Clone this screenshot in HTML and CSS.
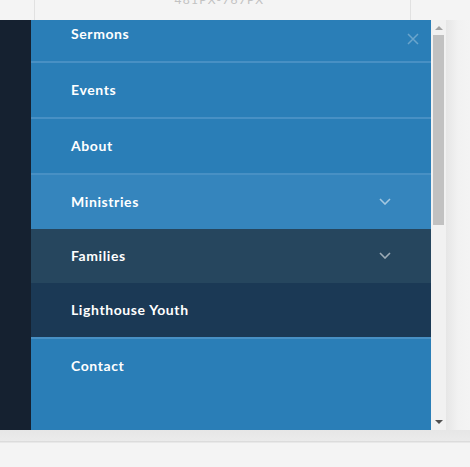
FILE: index.html
```html
<!DOCTYPE html>
<html>
<head>
<meta charset="utf-8">
<link rel="stylesheet" href="styles.css">
</head>
<body>
<div class="topbar">
  <div class="topbar-inner"><span class="size-label">481px-767px</span></div>
</div>
<div class="stage">
  <div class="dark-side"></div>
  <nav class="menu">
    <ul class="menu-list">
      <li class="item bordered"><span>Sermons</span></li>
      <li class="item bordered"><span>Events</span></li>
      <li class="item bordered"><span>About</span></li>
      <li class="item active"><span>Ministries</span>
        <svg class="chev" width="12" height="7" viewBox="0 0 12 7"><path d="M1 1 L6 6 L11 1" fill="none" stroke="currentColor" stroke-width="1.6"/></svg>
      </li>
      <li class="item parent"><span>Families</span>
        <svg class="chev" width="12" height="7" viewBox="0 0 12 7"><path d="M1 1 L6 6 L11 1" fill="none" stroke="currentColor" stroke-width="1.6"/></svg>
      </li>
      <li class="item sub bordered"><span>Lighthouse Youth</span></li>
      <li class="item"><span>Contact</span></li>
    </ul>
    <svg class="close" width="12" height="12" viewBox="0 0 12 12"><path d="M1 1 L11 11 M11 1 L1 11" stroke="currentColor" stroke-width="1.5"/></svg>
  </nav>
  <div class="scrollbar">
    <div class="arrow up"></div>
    <div class="track"><div class="thumb"></div></div>
    <div class="arrow down"></div>
  </div>
  <div class="right-shade"></div>
</div>
<div class="bottom"></div>
</body>
</html>
```
FILE: styles.css
```css
* { box-sizing: border-box; }
html, body { margin: 0; padding: 0; }
body {
  width: 470px;
  height: 467px;
  overflow: hidden;
  background: #f4f4f4;
  font-family: Lato, "Open Sans", sans-serif;
}
.topbar {
  height: 20px;
  background: #f4f4f4;
  overflow: hidden;
  padding: 0 59px 0 34px;
}
.topbar-inner {
  height: 20px;
  border-left: 1px solid #e1e1e1;
  border-right: 1px solid #e1e1e1;
  display: flex;
  justify-content: center;
  width: 377px;
}
.size-label {
  display: block;
  margin-top: -7px;
  font-size: 12px;
  letter-spacing: 1.3px;
  text-transform: uppercase;
  color: #c2c2c2;
  line-height: 14px;
  margin-left: -6px;
}
.stage {
  display: flex;
  height: 410px;
}
.dark-side {
  width: 31px;
  background: #152130;
}
.menu {
  position: relative;
  width: 400px;
  background: #2a7eb7;
  overflow: hidden;
}
.menu-list {
  list-style: none;
  margin: -13px 0 0 0;
  padding: 0;
}
.item {
  height: 54px;
  display: flex;
  align-items: center;
  justify-content: space-between;
  padding: 0 40px 2px 40px;
  color: #fff;
  font-weight: 700;
  font-size: 14px;
  letter-spacing: 0.6px;
}
.item.bordered {
  height: 56px;
  border-bottom: 2px solid #4890c4;
}
.item.active { background: #3585bd; }
.item.parent { background: #26465e; }
.item.sub { background: #1b3955; }
.chev {
  color: rgba(255,255,255,0.55);
  margin-top: 1px;
}
.close {
  position: absolute;
  top: 13px;
  right: 12px;
  color: rgba(255,255,255,0.3);
}
.scrollbar {
  width: 15px;
  background: #f1f1f1;
  display: flex;
  flex-direction: column;
  align-items: center;
}
.arrow {
  width: 0; height: 0;
  border-left: 4px solid transparent;
  border-right: 4px solid transparent;
}
.arrow.up {
  margin-top: 6px;
  border-bottom: 4px solid #a3a3a3;
}
.arrow.down {
  margin-bottom: 6px;
  border-top: 4px solid #505050;
}
.track {
  flex: 1;
  width: 11px;
  padding-top: 5px;
}
.thumb {
  height: 190px;
  background: #c1c1c1;
}
.right-shade {
  flex: 1;
  background: linear-gradient(to right, #e6e6e6, #f2f2f2 12px, #f4f4f4);
}
.bottom {
  height: 37px;
  background: linear-gradient(to bottom, #e6e6e6, #ebebeb 11px, #dcdcdc 11px, #dcdcdc 12px, #f4f4f4 13px);
}
```
